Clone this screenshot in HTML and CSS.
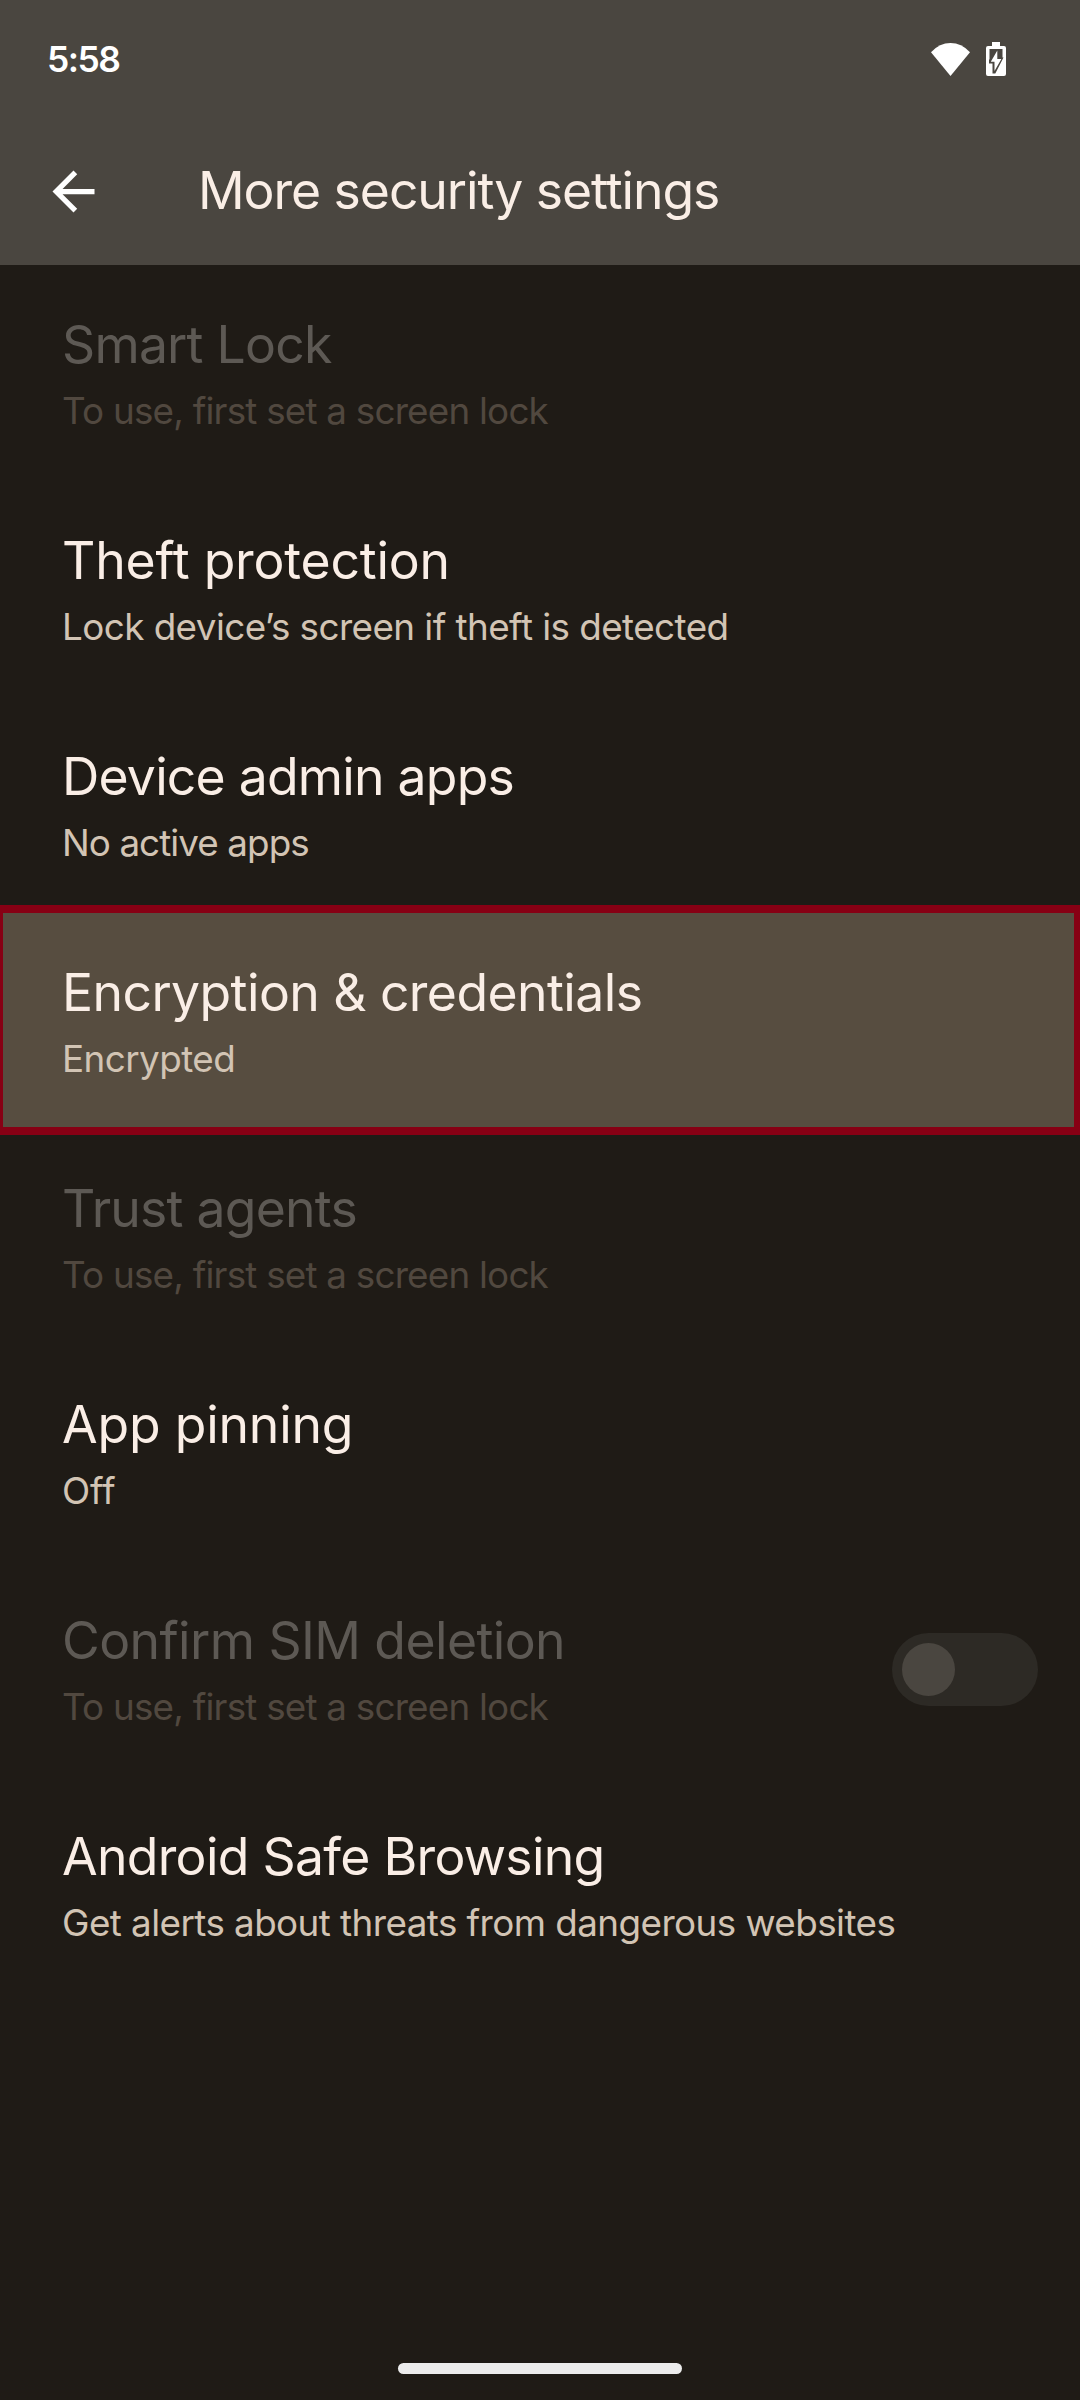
FILE: index.html
```
<!DOCTYPE html>
<html lang="en">
<head>
<meta charset="utf-8">
<title>More security settings</title>
<link rel="stylesheet" href="styles.css">
</head>
<body>
<div class="screen">
  <header class="top">
    <div class="status">
      <span class="clock">5:58</span>
      <div class="status-icons">
        <svg class="wifi" viewBox="0 0 39 33" width="39" height="33"><path d="M19.5 33 0 9.200Q8.500 0 19.500 0T39 9.200Z" fill="#fff"/></svg>
        <svg class="battery" viewBox="0 0 20 34" width="20" height="34">
          <path d="M6 0h8v4h4a2 2 0 0 1 2 2v26a2 2 0 0 1-2 2H2a2 2 0 0 1-2-2V6a2 2 0 0 1 2-2h4z" fill="#fff"/>
          <path d="M3.500 7H16.500V15.500H17.500L9.300 31.500H6.500V21.500H3V18L3.500 17Z" fill="#4a4640"/>
          <path d="M11.300 8.500 4.800 19.800H8.500V29L15.400 16.900H11.300Z" fill="#fff"/>
        </svg>
      </div>
    </div>
    <div class="appbar">
      <svg class="back" viewBox="0 0 24 24" width="63" height="63"><path d="M20 11H7.830l5.590-5.590L12 4l-8 8 8 8 1.410-1.410L7.830 13H20z" fill="#fff"/></svg>
      <h1 class="heading">More security settings</h1>
    </div>
  </header>
  <main class="list">
    <section class="row disabled"><div class="text"><h2 class="title tight">Smart Lock</h2><p class="summary snug">To use, first set a screen lock</p></div></section>
    <section class="row"><div class="text"><h2 class="title wide">Theft protection</h2><p class="summary">Lock device’s screen if theft is detected</p></div></section>
    <section class="row"><div class="text"><h2 class="title tight">Device admin apps</h2><p class="summary tight">No active apps</p></div></section>
    <section class="row selected"><div class="text"><h2 class="title">Encryption &amp; credentials</h2><p class="summary">Encrypted</p></div></section>
    <section class="row disabled"><div class="text"><h2 class="title tight">Trust agents</h2><p class="summary snug">To use, first set a screen lock</p></div></section>
    <section class="row"><div class="text"><h2 class="title wide">App pinning</h2><p class="summary wide">Off</p></div></section>
    <section class="row disabled"><div class="text"><h2 class="title">Confirm SIM deletion</h2><p class="summary snug">To use, first set a screen lock</p></div><div class="switch"><div class="knob"></div></div></section>
    <section class="row"><div class="text"><h2 class="title snug">Android Safe Browsing</h2><p class="summary">Get alerts about threats from dangerous websites</p></div></section>
  </main>
  <footer class="nav"><div class="handle"></div></footer>
</div>
</body>
</html>
```
FILE: styles.css
```
* { box-sizing: border-box; }
body { margin: 0; background: #1f1b16; font-family: Inter, "Open Sans", sans-serif; }
h1, h2, p { margin: 0; font-weight: 400; white-space: nowrap; }
svg { display: block; }

.screen { width: 1080px; height: 2400px; display: flex; flex-direction: column; background: #1f1b16; }

.top { height: 265px; background: #4a4640; }
.status { height: 118px; padding: 0 74px 0 47px; display: flex; justify-content: space-between; align-items: center; }
.clock { padding-top: 1px; font-size: 35.400px; font-weight: 600; line-height: 44px; letter-spacing: -1.500px; color: #fff; }
.status-icons { display: flex; align-items: center; gap: 16px; }

.appbar { height: 147px; padding-left: 42px; display: flex; align-items: center; gap: 93px; }
.heading { margin-bottom: 3px; font-size: 51.700px; line-height: 64px; letter-spacing: -1.070px; color: #faeee6; }

.list { display: flex; flex-direction: column; }
.row { height: 216px; padding: 47px 42px 0 62px; display: flex; justify-content: space-between; align-items: flex-start; color: #faeee6; }
.text { display: flex; flex-direction: column; gap: 12px; }
.title { font-size: 51.700px; line-height: 64px; letter-spacing: -0.580px; }
.title.wide { letter-spacing: -0.200px; }
.title.snug { letter-spacing: -0.710px; }
.title.tight { letter-spacing: -0.780px; }
.summary { font-size: 36.800px; line-height: 46px; letter-spacing: -0.560px; color: #d2c4b4; }
.summary.snug { letter-spacing: -0.780px; }
.summary.tight { letter-spacing: -0.920px; }
.summary.wide { letter-spacing: -0.130px; }

.disabled .title { color: #5d5954; }
.disabled .summary { color: #51483f; }

.selected { height: 230px; margin: -8px 0 -6px; padding: 47px 36px 0 59px; border: solid #870014; border-width: 8px 6px 8px 3px; background: #574d40; }

.switch { width: 146px; height: 73px; margin-top: 25px; padding: 10px; border-radius: 37px; background: #2d2a25; }
.knob { width: 53px; height: 53px; border-radius: 50%; background: #4a4640; }

.nav { margin-top: auto; height: 37px; display: flex; justify-content: center; }
.handle { width: 284px; height: 11px; border-radius: 6px; background: #ececec; }
```
